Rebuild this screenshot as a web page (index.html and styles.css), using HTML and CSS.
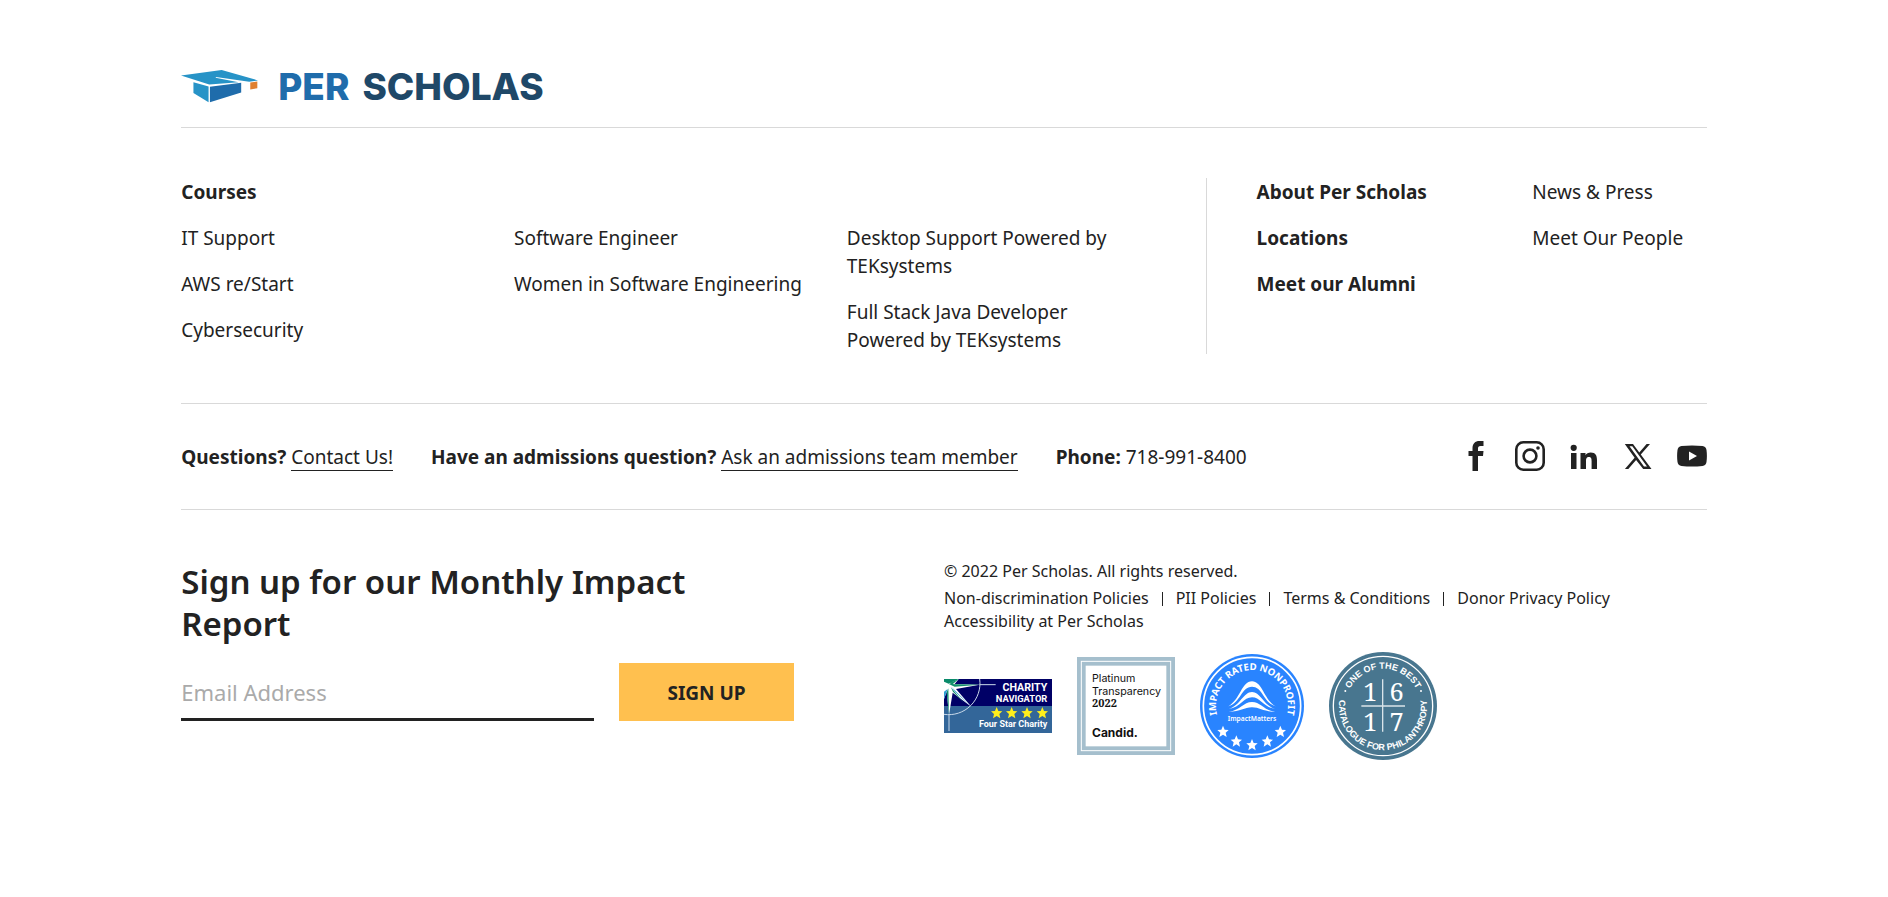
FILE: index.html
```html
<!DOCTYPE html>
<html lang="en">
<head>
<meta charset="utf-8">
<meta name="viewport" content="width=device-width, initial-scale=1">
<title>Per Scholas</title>
<link rel="stylesheet" href="styles.css">
</head>
<body>
<footer class="footer">
  <div class="brand-row">
    <a class="brand" href="#" aria-label="Per Scholas">
      <svg class="brand-cap" viewBox="34 60 229 98" aria-hidden="true">
        <path fill="#2793c7" d="M34 76 155 60 263 91 237 95 138 81 137 83 205 96 118 103z"/>
        <path fill="#2793c7" d="M71 96 116 109V156L71 128z"/>
        <path fill="#1f6cab" d="M120 110 213 98V127L120 156z"/>
        <path fill="#e08030" d="M240 97 261 94V114L240 118z"/>
      </svg>
      <span class="brand-name"><span class="brand-per">PER</span><span>SCHOLAS</span></span>
    </a>
  </div>

  <div class="nav-row">
    <nav class="courses" aria-label="Courses">
      <a class="strong" href="#">Courses</a>
      <div class="course-grid">
        <ul class="list"><li><a href="#">IT Support</a></li><li><a href="#">AWS re/Start</a></li><li><a href="#">Cybersecurity</a></li></ul>
        <ul class="list"><li><a href="#">Software Engineer</a></li><li><a href="#">Women in Software Engineering</a></li></ul>
        <ul class="list partner"><li><a href="#">Desktop Support Powered by TEKsystems</a></li><li><a href="#">Full Stack Java Developer Powered by TEKsystems</a></li></ul>
      </div>
    </nav>
    <nav class="about" aria-label="About">
      <ul class="list strong"><li><a href="#">About Per Scholas</a></li><li><a href="#">Locations</a></li><li><a href="#">Meet our Alumni</a></li></ul>
      <ul class="list"><li><a href="#">News &amp; Press</a></li><li><a href="#">Meet Our People</a></li></ul>
    </nav>
  </div>

  <div class="contact-row">
    <div class="contacts">
      <p><strong>Questions?</strong> <a class="underlined" href="#">Contact Us!</a></p>
      <p><strong>Have an admissions question?</strong> <a class="underlined" href="#">Ask an admissions team member</a></p>
      <p><strong>Phone:</strong> <a href="#">718-991-8400</a></p>
    </div>
    <div class="social">
      <a href="#" aria-label="Facebook"><svg viewBox="0 0 30 30"><path d="M11.500 30V15H7.500V10H11.500V7.500C11.500 2.500 14 0 18.500 0H22.500V5H19.500C17.500 5 17 6 17 7.500V10H22.500L22 15H17V30z"/></svg></a>
      <a href="#" aria-label="Instagram"><svg viewBox="0 0 30 30"><g fill="none" stroke="#222" stroke-width="2.600"><rect x="1.300" y="1.300" width="27.400" height="27.400" rx="7"/><circle cx="15" cy="15" r="6.400"/></g><circle cx="23" cy="7" r="1.800"/></svg></a>
      <a href="#" aria-label="LinkedIn"><svg viewBox="0 0 30 30"><circle cx="4.700" cy="6.800" r="3.100"/><path d="M2 12H7.500V28H2zM11.500 12H16.500V14.300C17.500 12.600 19.300 11.600 21.700 11.600C26.800 11.600 28 15 28 19.300V28H22.600V20.300C22.600 18.300 22.500 16 20 16C17.400 16 17 18 17 20.200V28H11.500z"/></svg></a>
      <a href="#" aria-label="X"><svg viewBox="0 0 30 30"><path fill-rule="evenodd" d="M1.800 3H10L16.300 11.400 23.600 3H27L17.800 13.400 28.500 28H20.200L13.100 18.900 5.300 28H1.900L11.600 16.800zM6.500 5.200 21 25.600H24L9.300 5.200z"/></svg></a>
      <a href="#" aria-label="YouTube"><svg viewBox="0 0 30 30"><path fill-rule="evenodd" d="M4.500 5Q15 4 25.500 5Q29 5.400 29.500 9Q30.300 15 29.500 21Q29 24.600 25.500 25Q15 26 4.500 25Q1 24.600 .5 21Q-.3 15 .5 9Q1 5.400 4.500 5zM12 10.500V19.500L20 15z"/></svg></a>
    </div>
  </div>

  <div class="bottom-row">
    <section class="signup">
      <h2>Sign up for our Monthly Impact Report</h2>
      <form class="signup-form">
        <input type="email" placeholder="Email Address" aria-label="Email Address">
        <button type="button">SIGN UP</button>
      </form>
    </section>
    <section class="legal">
      <p>© 2022 Per Scholas. All rights reserved.</p>
      <ul class="policies">
        <li><a href="#">Non-discrimination Policies</a></li><li><a href="#">PII Policies</a></li><li><a href="#">Terms &amp; Conditions</a></li><li><a href="#">Donor Privacy Policy</a></li><li><a href="#">Accessibility at Per Scholas</a></li>
      </ul>
      <div class="badges">
        <svg width="108" height="54" viewBox="0 0 324 162" role="img" aria-label="Charity Navigator Four Star Charity">
          <defs><path id="star" d="M0-18 5-6 17-5 8 3 11 16 0 9-11 16-8 3-17-5-5-6z"/></defs>
          <rect width="324" height="162" fill="#006"/><rect y="81" width="324" height="81" fill="#369"/>
          <path fill="#0a8a6a" d="M0 0H45L20 20 0 45z"/>
          <path fill="#fff" d="M14 14 44 0 32 15 107 17 36 30 82 83 26 41 15 108 8 38 0 60V8z"/>
          <path fill="#12906c" d="M14 15 107 17 32 23zM20 24 60 72 27 38zM13 28 15 108 8 40zM16 12 44 0 24 17z"/>
          <path fill="#2e9bd2" d="M22 23 82 83 34 39zM0 38 11 30 0 60z"/>
          <path fill="none" stroke="#c9d9ea" stroke-width="3" d="M107 0A94 94 0 0 1 0 106M107 17H155M15 106V156"/>
          <g fill="#fff" font-family="Roboto, sans-serif" font-weight="bold" text-anchor="end">
            <text x="310" y="35" font-size="32">CHARITY</text><text x="310" y="70" font-size="28">NAVIGATOR</text><text x="310" y="145" font-size="27">Four Star Charity</text>
          </g>
          <g fill="#ffef1c"><use href="#star" x="158" y="102"/><use href="#star" x="203" y="102"/><use href="#star" x="249" y="102"/><use href="#star" x="295" y="102"/></g>
        </svg>
        <svg width="98" height="98" viewBox="0 0 294 294" role="img" aria-label="Candid Platinum Transparency 2022">
          <rect width="294" height="294" fill="#a5bfcd"/><rect x="13" y="13" width="268" height="268" fill="none" stroke="#fff" stroke-width="3"/><rect x="26" y="26" width="242" height="242" fill="#fff"/>
          <g fill="#111" font-family="Inter, sans-serif"><text x="45" y="75" font-size="32">Platinum</text><text x="45" y="113" font-size="32">Transparency</text><text x="45" y="151" font-size="33" font-weight="bold" font-family="Noto Serif, DejaVu Serif, serif">2022</text><text x="45" y="241" font-size="36" font-weight="bold">Candid.</text></g>
        </svg>
        <svg width="104" height="104" viewBox="0 0 312 312" role="img" aria-label="Impact Rated Nonprofit, ImpactMatters">
          <circle cx="156" cy="156" r="156" fill="#2984ff"/><circle cx="156" cy="156" r="146" fill="none" stroke="#fff" stroke-width="5"/>
          <path id="impact-arc" fill="none" d="M54.400 193A108 108 0 1 1 257.600 193"/>
          <g fill="#fff">
            <text font-family="Noto Sans, sans-serif" font-size="29" font-weight="bold" text-anchor="middle"><textPath href="#impact-arc" startOffset="50%">IMPACT RATED NONPROFIT</textPath></text>
            <path d="M85 157C120 138 125 82 156 82S192 138 227 157C190 146 188 98 156 98S122 146 85 157z"/>
            <path d="M86 165C122 154 130 114 156 114S190 154 226 165C190 160 182 130 156 130S122 160 86 165z"/>
            <path d="M86 174C122 168 130 144 156 144S190 168 226 174C190 173 180 160 156 160S122 173 86 174z"/>
            <text x="156" y="200" font-family="Noto Sans, sans-serif" font-size="20" font-weight="600" text-anchor="middle">ImpactMatters</text>
            <use href="#star" x="69" y="233"/><use href="#star" x="109" y="262"/><use href="#star" x="156" y="273"/><use href="#star" x="202" y="262"/><use href="#star" x="241" y="233"/>
          </g>
        </svg>
        <svg width="108" height="108" viewBox="0 0 324 324" role="img" aria-label="One of the Best, Catalogue for Philanthropy 16 17">
          <circle cx="162" cy="162" r="162" fill="#48768f"/><circle cx="162" cy="162" r="149" fill="none" stroke="#fff" stroke-width="4"/>
          <path id="best-arc" fill="none" d="M50 162A112 112 0 0 1 274 162"/><path id="catalogue-arc" fill="none" d="M41.700 108A132 132 0 1 0 282.300 108"/>
          <g fill="#fff" font-family="Liberation Sans, sans-serif" font-weight="bold" font-size="27" text-anchor="middle">
            <text><textPath href="#best-arc" startOffset="50%">ONE OF THE BEST</textPath></text>
            <text><textPath href="#catalogue-arc" startOffset="50%">CATALOGUE FOR PHILANTHROPY</textPath></text>
            <circle cx="49" cy="117" r="3"/><circle cx="276" cy="117" r="3"/>
            <g font-family="Noto Serif, DejaVu Serif, serif" font-weight="normal" font-size="76"><text x="124" y="147">1</text><text x="203" y="147">6</text><text x="124" y="238">1</text><text x="203" y="238">7</text></g>
          </g>
          <path stroke="#d9e4e9" stroke-width="4" d="M161 82V239M97 162H228"/>
        </svg>
      </div>
    </section>
  </div>
</footer>
</body>
</html>
```
FILE: styles.css
```css
* { box-sizing: border-box; }
body { margin: 0; background: #fff; color: #222; font: 19px/28px "Noto Sans", sans-serif; }
a { color: inherit; text-decoration: none; }
p, h2, ul { margin: 0; padding: 0; list-style: none; }
.footer { padding: 66px 9.6% 120px; }
.brand-row { padding-bottom: 21px; border-bottom: 1px solid #d9d9d9; }
.brand { display: inline-flex; align-items: center; gap: 20px; height: 40px; vertical-align: top; }
.brand-cap { width: 77px; height: 33px; }
.brand-name { display: flex; gap: 13px; padding-top: 2px; font: 800 37px/40px Inter, sans-serif; color: #1f4868; }
.brand-per { color: #1f6cab; }
.strong, strong { font-weight: 700; }
.nav-row { display: grid; grid-template-columns: 1025fr 500fr; padding: 50px 0 49px; border-bottom: 1px solid #d9d9d9; }
.courses { display: grid; gap: 18px; border-right: 1px solid #d9d9d9; padding-right: 48px; }
.course-grid { display: grid; grid-template-columns: repeat(3, 1fr); column-gap: 22px; }
.list { display: grid; gap: 18px; align-content: start; }
.partner { padding-right: 20px; }
.about { display: grid; grid-template-columns: 275fr 174fr; padding-left: 50px; }
.contact-row { display: flex; justify-content: space-between; align-items: center; min-height: 106px; padding-bottom: 2px; border-bottom: 1px solid #d9d9d9; }
.contacts { display: flex; gap: 38px; padding-top: 2px; }
.underlined { border-bottom: 1px solid #222; }
.social { display: flex; gap: 24px; }
.social a, .social svg { display: block; width: 30px; height: 30px; fill: #222; }
.bottom-row { display: grid; grid-template-columns: 1fr 1fr; padding-top: 50px; }
.signup { padding: 1px 150px 0 0; }
.signup h2 { font-size: 33px; line-height: 42px; font-weight: 600; max-width: 560px; }
.signup-form { display: flex; gap: 25px; margin-top: 18px; }
.signup-form input { flex: 1; min-width: 0; height: 58px; padding: 2px 0 0; border: 0; border-bottom: 3px solid #222; background: none; font: inherit; font-size: 22px; color: #222; border-radius: 0; }
.signup-form input::placeholder { color: #aaa; opacity: 1; }
.signup-form button { width: 175px; height: 58px; border: 0; background: #ffc04f; color: #222; font: inherit; font-weight: 700; padding: 2px 0 0; }
.legal { font-size: 16px; line-height: 23px; }
.policies { display: flex; flex-wrap: wrap; margin-top: 4px; }
.policies li { display: flex; align-items: center; }
.policies li:nth-child(-n+3)::after { content: ""; width: 1px; height: 14px; margin: 0 13px; background: #222; }
.badges { display: flex; align-items: center; gap: 25px; margin-top: 19px; }
.badges svg { flex: none; }
```
